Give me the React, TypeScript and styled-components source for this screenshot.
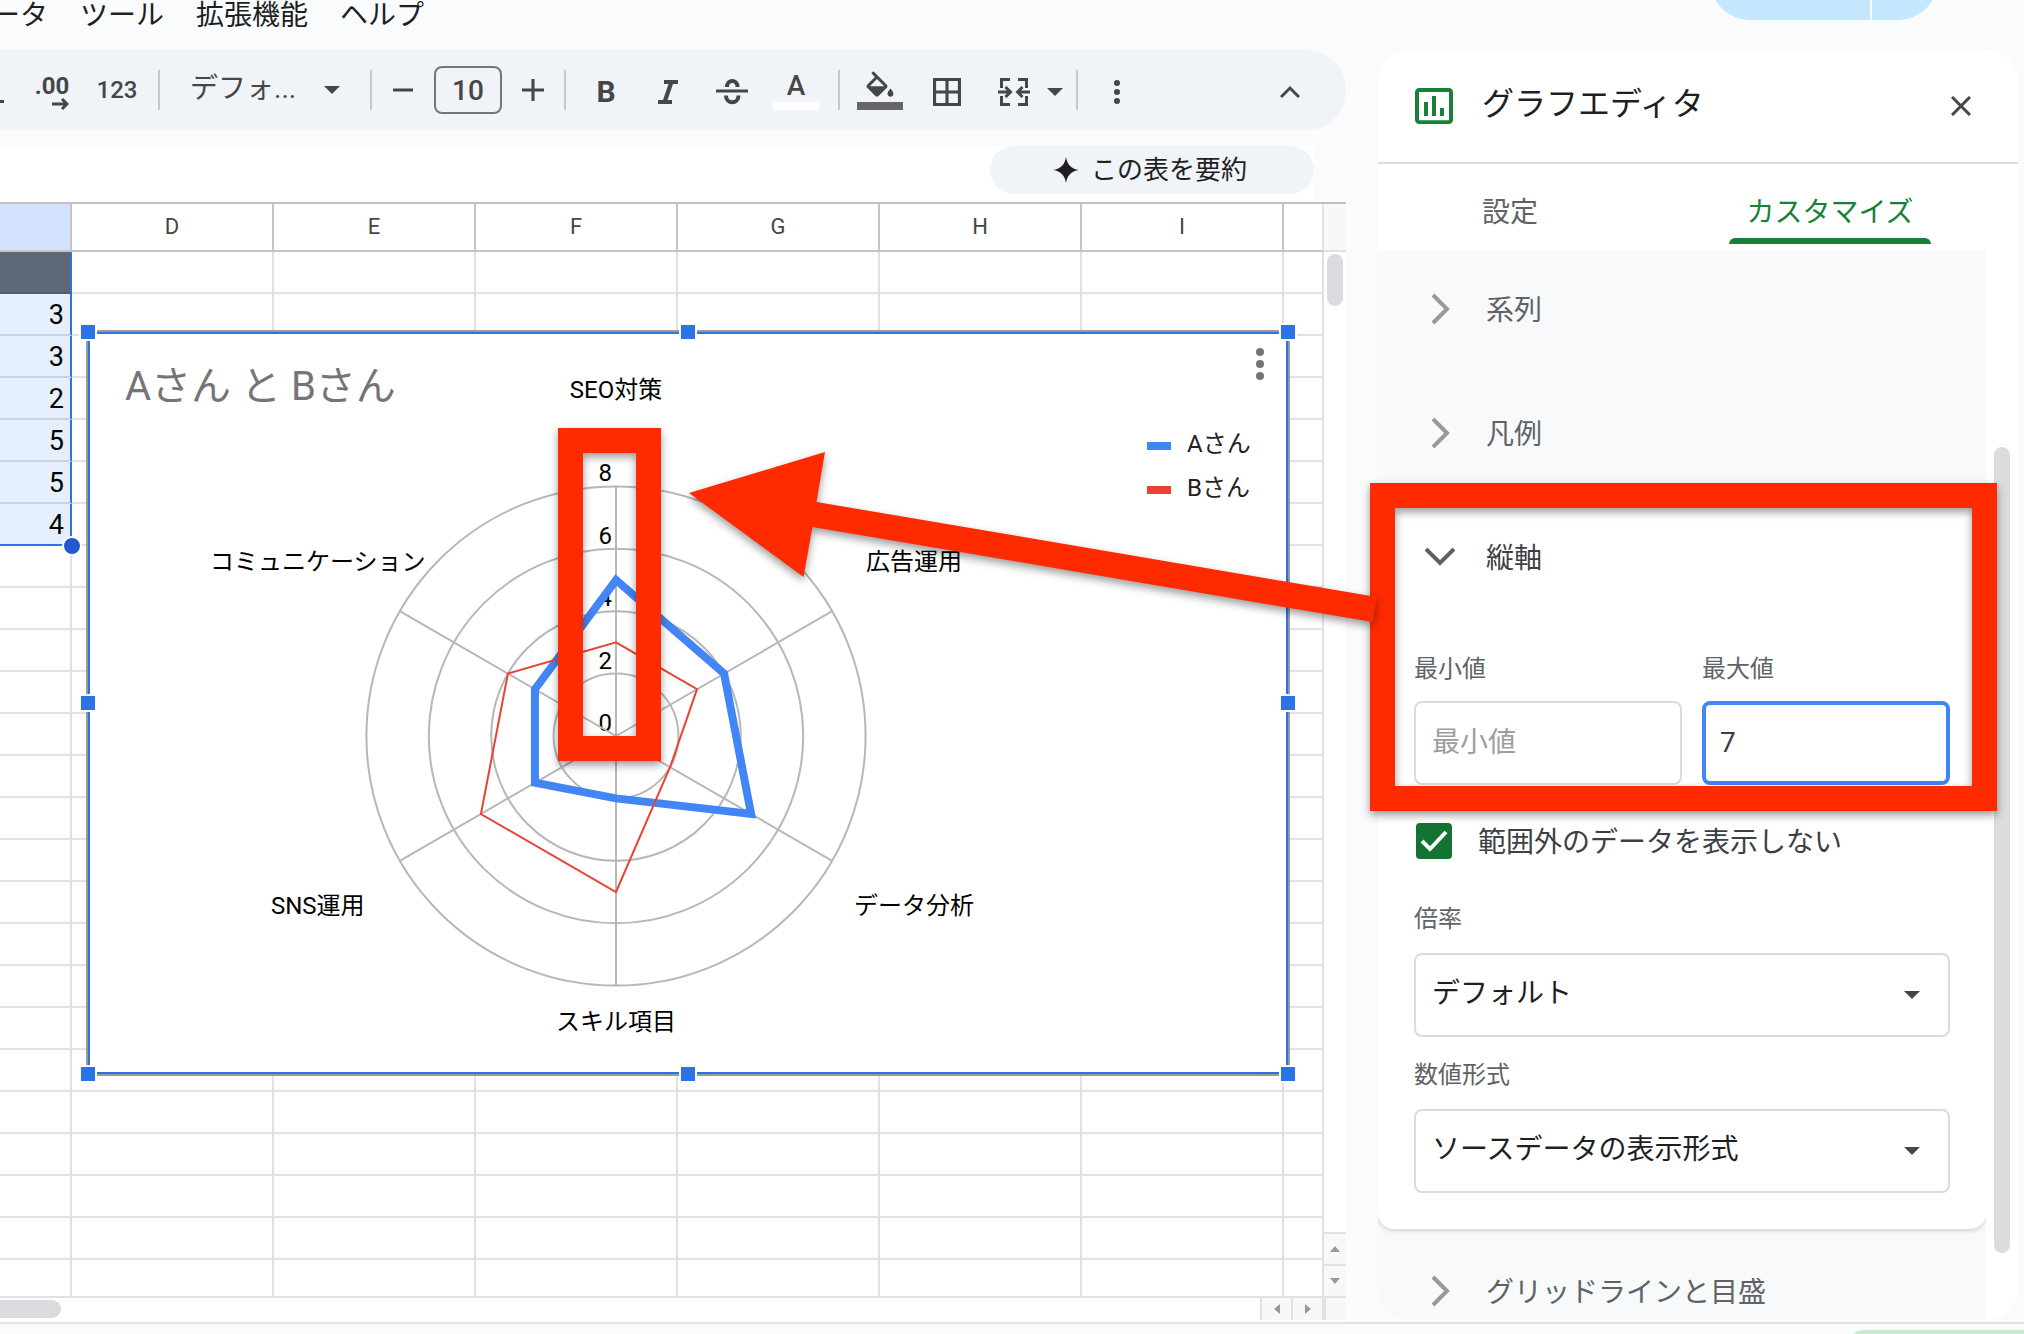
import React from "react";
import styled, { createGlobalStyle } from "styled-components";

const INK = "#1f1f1f";
const ICON = "#444746";
const MUTED = "#5f6368";
const LINE = "#e1e1e1";
const HEAD_LINE = "#c4c4c4";
const PANEL_LINE = "#dadce0";
const SURFACE = "#f9fbfd";
const TOOL_BG = "#f0f3f8";
const BLUE = "#2a74e8";
const GREEN = "#188038";
const MARK = "#ff2a00";

const GlobalStyle = createGlobalStyle`
  *, *::before, *::after { box-sizing: border-box; }
  body {
    margin: 0;
    background: ${SURFACE};
    color: ${INK};
    font-family: Roboto, "Noto Sans CJK JP", sans-serif;
    font-size: 28px;
  }
  button, input, select { font: inherit; color: inherit; margin: 0; }
  button { border: 0; background: none; padding: 0; cursor: pointer; }
  svg { display: block; flex: none; }
`;

/* ---------- page frame ---------- */

const Page = styled.div`
  position: relative;
  display: flex;
  flex-direction: column;
  height: 100vh;
  overflow: hidden;
`;

const TopBar = styled.header`
  display: flex;
  justify-content: space-between;
  flex: none;
  height: 50px;
`;

const MenuList = styled.nav`
  display: flex;
  align-items: flex-start;
  margin-left: -52px;
`;

const MenuItem = styled.button`
  padding: 0 16px;
  height: 32px;
  line-height: 32px;
  white-space: nowrap;
`;

const ShareGroup = styled.div`
  display: flex;
  align-self: flex-end;
  gap: 2px;
  margin: 0 86px 30px 0;
`;

const ShareButton = styled.button<{ $side: "left" | "right" }>`
  width: ${(p) => (p.$side === "left" ? 160 : 66)}px;
  height: 80px;
  background: #c2e7ff;
  border-radius: ${(p) => (p.$side === "left" ? "40px 0 0 40px" : "0 40px 40px 0")};
`;

const Main = styled.main`
  display: flex;
  flex: 1;
  min-height: 0;
  gap: 32px;
  padding-right: 6px;
`;

const Workspace = styled.section`
  display: flex;
  flex-direction: column;
  flex: 1;
  min-width: 0;
`;

const Footer = styled.footer`
  display: flex;
  justify-content: flex-end;
  flex: none;
  height: 12px;
  padding-top: 6px;
  border-top: 2px solid #e1e3e1;
  overflow: hidden;
`;

const FooterChip = styled.button`
  width: 200px;
  height: 60px;
  margin-right: -24px;
  border-radius: 16px;
  background: #c4eed0;
`;

/* ---------- toolbar ---------- */

const Toolbar = styled.div`
  display: flex;
  align-items: center;
  flex: none;
  height: 80px;
  margin-bottom: 16px;
  padding-right: 34px;
  background: ${TOOL_BG};
  border-radius: 0 40px 40px 0;
  color: ${ICON};
  fill: ${ICON};
`;

const Tool = styled.button<{ $w: number; $low?: boolean }>`
  display: flex;
  flex-direction: column;
  align-items: center;
  justify-content: center;
  flex: none;
  width: ${(p) => p.$w}px;
  height: 56px;
  padding-top: ${(p) => (p.$low ? 4 : 0)}px;
`;

const Rule = styled.span`
  flex: none;
  width: 2px;
  height: 40px;
  margin: 0 10px;
  background: #c7c7c7;
`;

const Spacer = styled.span`
  flex: 1;
`;

const SmallGlyph = styled.span`
  font-size: 24px;
  font-weight: 500;
  line-height: 24px;
`;

const DecimalGlyph = styled.span`
  font-size: 24px;
  font-weight: 700;
  line-height: 24px;
`;

const BoldGlyph = styled.span`
  font-size: 30px;
  font-weight: 700;
  line-height: 32px;
`;

const ColourGlyph = styled.span`
  font-size: 28px;
  font-weight: 500;
  line-height: 28px;
`;

const SizeInput = styled.input`
  width: 68px;
  height: 48px;
  margin: 0 10px;
  padding: 0;
  border: 2px solid #747775;
  border-radius: 8px;
  background: none;
  font-weight: 500;
  text-align: center;
`;

const ColourTool = styled(Tool)`
  justify-content: flex-end;
  height: 40px;
  padding: 0;
`;

const ColourBar = styled.span<{ $c: string }>`
  flex: none;
  width: 46px;
  height: 8px;
  margin-top: 2px;
  background: ${(p) => p.$c};
`;

const Picker = styled.div`
  position: relative;
  flex: none;
  width: 190px;
  height: 48px;
`;

const PickerSelect = styled.select`
  appearance: none;
  width: 100%;
  height: 44px;
  padding: 0 0 0 20px;
  border: 0;
  background: none;
`;

const PickerCaret = styled.span`
  position: absolute;
  right: 20px;
  top: 20px;
  pointer-events: none;
`;

/* ---------- formula bar ---------- */

const FormulaBar = styled.div`
  display: flex;
  justify-content: flex-end;
  flex: none;
  height: 56px;
  margin-right: 32px;
  background: #fff;
`;

const SummaryButton = styled.button`
  display: flex;
  align-items: center;
  justify-content: center;
  gap: 12px;
  width: 324px;
  height: 48px;
  padding-right: 4px;
  border-radius: 24px;
  background: ${TOOL_BG};
  font-size: 26px;
  line-height: 44px;
`;

/* ---------- sheet ---------- */

const Sheet = styled.div`
  display: flex;
  flex-direction: column;
  flex: 1;
  min-height: 0;
  border-top: 2px solid #c0c0c0;
  background: #fff;
`;

const SheetBody = styled.div`
  display: flex;
  flex: 1;
  min-height: 0;
  border-bottom: 2px solid ${LINE};
`;

const GridView = styled.div`
  position: relative;
  flex: 1;
  min-width: 0;
  overflow: hidden;
`;

const Grid = styled.table`
  width: 100%;
  table-layout: fixed;
  border-collapse: separate;
  border-spacing: 0;
`;

const HeadCell = styled.th<{ $w?: number; $on?: boolean }>`
  width: ${(p) => (p.$w ? `${p.$w}px` : "auto")};
  height: 48px;
  padding: 0;
  border-right: 2px solid ${HEAD_LINE};
  border-bottom: 2px solid ${HEAD_LINE};
  background: ${(p) => (p.$on ? "#d3e3fd" : "#fff")};
  color: ${ICON};
  font-size: 22px;
  font-weight: 400;
  line-height: 44px;
  &:last-child { border-right-color: ${LINE}; }
`;

const Cell = styled.td`
  height: 42px;
  padding: 0;
  border-right: 2px solid ${LINE};
  border-bottom: 2px solid ${LINE};
`;

const PickedCell = styled(Cell)<{ $kind: "head" | "mid" | "last" }>`
  position: relative;
  padding: 2px 6px 0 0;
  border-right-color: ${BLUE};
  border-bottom-color: ${(p) => (p.$kind === "head" ? "#555d6a" : p.$kind === "mid" ? "#c9d2e3" : BLUE)};
  background: ${(p) => (p.$kind === "head" ? "#5f6876" : "#e6effd")};
  color: #000;
  font-size: 27px;
  line-height: 38px;
  text-align: right;
`;

const FillHandle = styled.span`
  position: absolute;
  right: -12px;
  bottom: -12px;
  z-index: 1;
  width: 20px;
  height: 20px;
  border: 2px solid #fff;
  border-radius: 50%;
  background: #2457d0;
`;

const VScroll = styled.div`
  display: flex;
  flex-direction: column;
  flex: none;
  width: 22px;
`;

const VHead = styled.div`
  height: 48px;
  border-bottom: 2px solid ${LINE};
  background: #f8f8f8;
`;

const VTrack = styled.div`
  flex: 1;
  padding: 2px 3px;
`;

const VThumb = styled.div`
  height: 52px;
  border-radius: 8px;
  background: #dadce0;
`;

const VButton = styled.button`
  display: flex;
  align-items: center;
  justify-content: center;
  height: 32px;
  border-top: 2px solid ${LINE};
  background: #f8f8f8;
`;

const HScroll = styled.div`
  display: flex;
  flex: none;
  height: 22px;
  margin-bottom: 2px;
`;

const HTrack = styled.div`
  flex: 1;
  padding: 2px 0;
`;

const HThumb = styled.div`
  width: 61px;
  height: 18px;
  border-radius: 0 9px 9px 0;
  background: #dadce0;
`;

const HButton = styled.button`
  display: flex;
  align-items: center;
  justify-content: center;
  width: 31px;
  border-left: 2px solid ${LINE};
  background: #f8f8f8;
`;

const Corner = styled.div`
  width: 24px;
  border-left: 4px solid #e1e3e1;
  background: #f8f8f8;
`;

/* ---------- floating chart ---------- */

const ChartFrame = styled.figure`
  position: absolute;
  left: 86px;
  top: 126px;
  width: 1204px;
  height: 746px;
  margin: 0;
  border: 2px solid #999;
  background: #fff;
  box-shadow: inset 0 0 0 2px ${BLUE};
`;

const ChartSvg = styled.svg`
  margin: -2px;
  font-size: 24px;
`;

const Handle = styled.span<{ $x: number; $y: number }>`
  position: absolute;
  left: ${(p) => p.$x}%;
  top: ${(p) => p.$y}%;
  width: 18px;
  height: 18px;
  margin: -9px;
  border: 2px solid #fff;
  background: ${BLUE};
`;

/* ---------- chart editor ---------- */

const Editor = styled.aside`
  display: flex;
  flex-direction: column;
  flex: none;
  width: 640px;
  margin-bottom: 2px;
  border-radius: 32px;
  background: #fff;
  overflow: hidden;
`;

const EditorHead = styled.div`
  display: flex;
  align-items: center;
  flex: none;
  height: 114px;
  padding: 0 34px 0 32px;
  border-bottom: 2px solid ${PANEL_LINE};
`;

const EditorTitle = styled.h2`
  flex: 1;
  margin: 0 0 4px 24px;
  font-size: 32px;
  font-weight: 400;
  line-height: 40px;
`;

const CloseButton = styled.button`
  display: flex;
  align-items: center;
  justify-content: center;
  width: 46px;
  height: 46px;
`;

const Tabs = styled.div`
  position: relative;
  display: grid;
  grid-template-columns: 264fr 376fr;
  justify-items: center;
  flex: none;
  height: 83px;
  background: #fff;
  box-shadow: 0 3px 0 #fff;
`;

const Tab = styled.button<{ $on?: boolean }>`
  position: relative;
  height: 80px;
  padding: 12px 17px 0;
  color: ${(p) => (p.$on ? GREEN : MUTED)};
  &::after {
    content: "";
    position: absolute;
    inset: auto 0 0;
    height: 6px;
    border-radius: 6px 6px 0 0;
    background: ${(p) => (p.$on ? GREEN : "transparent")};
  }
`;

const EditorBody = styled.div`
  display: flex;
  flex: 1;
  min-height: 0;
`;

const Sections = styled.div`
  flex: 1;
  min-width: 0;
  overflow: hidden;
  background: #f8f9fb;
`;

const SectionHead = styled.button<{ $open?: boolean }>`
  display: flex;
  align-items: center;
  gap: 18px;
  width: 100%;
  height: 124px;
  padding-left: 30px;
  color: ${(p) => (p.$open ? "#3c4043" : MUTED)};
  text-align: left;
`;

const SectionName = styled.span`
  padding-bottom: 2px;
`;

const OpenCard = styled.section`
  border-radius: 16px;
  background: #fff;
  box-shadow: 0 2px 4px rgba(60, 64, 67, 0.2);
`;

const Fields = styled.div`
  padding: 34px 36px 36px;
`;

const Pair = styled.div`
  display: grid;
  grid-template-columns: 268fr 248fr;
  gap: 20px;
`;

const Label = styled.label`
  display: block;
  color: ${MUTED};
  font-size: 24px;
  line-height: 32px;
`;

const NumberBox = styled.input`
  display: block;
  width: 100%;
  height: 84px;
  margin-top: 16px;
  padding: 0 16px 2px;
  border: 2px solid ${PANEL_LINE};
  border-radius: 8px;
  outline: 0;
  color: #3c4043;
  &::placeholder { color: #9e9e9e; }
`;

const ActiveNumberBox = styled(NumberBox)`
  padding: 0 14px 2px;
  border: 4px solid #4285f4;
`;

const CheckRow = styled.label`
  display: flex;
  align-items: center;
  gap: 26px;
  height: 36px;
  margin: 38px 0 44px 2px;
  color: #3c4043;
`;

const CheckText = styled.span`
  padding-bottom: 2px;
`;

const CheckWrap = styled.span`
  position: relative;
  width: 36px;
  height: 36px;
`;

const CheckBox = styled.input`
  appearance: none;
  display: block;
  width: 36px;
  height: 36px;
  border-radius: 4px;
  background: #137333;
`;

const CheckMark = styled.svg`
  position: absolute;
  inset: 0;
  pointer-events: none;
`;

const SelectWrap = styled.div`
  position: relative;
  margin: 18px 0 22px;
  &:last-child { margin-bottom: 0; }
`;

const SelectBox = styled.select`
  appearance: none;
  display: block;
  width: 100%;
  height: 84px;
  padding: 0 60px 4px 16px;
  border: 2px solid ${PANEL_LINE};
  border-radius: 8px;
  background: #fff;
`;

const SelectCaret = styled.span`
  position: absolute;
  right: 30px;
  top: 38px;
  pointer-events: none;
`;

const EditorTrack = styled.div`
  flex: none;
  width: 32px;
  padding: 200px 8px 0;
`;

const EditorThumb = styled.div`
  height: 806px;
  border-radius: 8px;
  background: ${PANEL_LINE};
`;

/* ---------- annotations drawn over the page ---------- */

const MarkBox = styled.div`
  position: absolute;
  border: 25px solid ${MARK};
  pointer-events: none;
  filter: drop-shadow(0 4px 4px rgba(0, 0, 0, 0.4));
`;

const AxisMark = styled(MarkBox)`
  left: 558px;
  top: 428px;
  width: 103px;
  height: 333px;
`;

const FieldMark = styled(MarkBox)`
  right: 27px;
  top: 483px;
  width: 627px;
  height: 328px;
`;

const ArrowMark = styled.svg`
  position: absolute;
  right: 640px;
  top: 440px;
  pointer-events: none;
  filter: drop-shadow(0 4px 4px rgba(0, 0, 0, 0.4));
`;

/* ---------- icons ---------- */

const Caret = () => (
  <svg width="16" height="8" viewBox="0 0 16 8" fill={ICON}>
    <path d="M0 0h16L8 8z" />
  </svg>
);

const Triangle = ({ turn }: { turn: number }) => (
  <svg width="12" height="12" viewBox="0 0 12 12" fill="#999">
    <path d="M1 9h10L6 3z" transform={`rotate(${turn} 6 6)`} />
  </svg>
);

const Chevron = ({ open }: { open?: boolean }) => (
  <svg width="60" height="40" viewBox="0 0 60 40" fill="none" stroke={open ? "#616161" : "#999"} strokeWidth="4">
    {open ? <path d="M18 12l14 14 14-14" /> : <path d="M25 6l14 14-14 14" />}
  </svg>
);

/* ---------- radar chart ---------- */

const CX = 530;
const CY = 406;
const UNIT = 31.2;
const AXES = [0, 1, 2, 3, 4, 5];

const spot = (axis: number, value: number) => {
  const a = (axis * Math.PI) / 3;
  return `${CX + Math.sin(a) * value * UNIT},${CY - Math.cos(a) * value * UNIT}`;
};

const SERIES = [
  { name: "Aさん", colour: "#4285f4", width: 8, values: [5, 4, 5, 2, 3, 3] },
  { name: "Bさん", colour: "#ea4335", width: 2, values: [3, 3, 2, 5, 5, 4] },
];

const AXIS_LABELS: { text: string; x: number; y: number; mid?: boolean }[] = [
  { text: "SEO対策", x: 530, y: 68, mid: true },
  { text: "広告運用", x: 780, y: 240 },
  { text: "データ分析", x: 768, y: 584 },
  { text: "スキル項目", x: 530, y: 700, mid: true },
  { text: "SNS運用", x: 185, y: 584 },
  { text: "コミュニケーション", x: 124, y: 240 },
];

const Radar = () => (
  <ChartSvg width="1204" height="746" viewBox="0 0 1204 746">
    <text x="39" y="70" fontSize="40" fill="#757575">Aさん と Bさん</text>
    {AXIS_LABELS.map((l) => (
      <text key={l.text} x={l.x} y={l.y} textAnchor={l.mid ? "middle" : "start"}>{l.text}</text>
    ))}
    {[0, 2, 4, 6, 8].map((v) => (
      <text key={v} x="526" y={Math.round(401 - v * UNIT)} textAnchor="end">{v}</text>
    ))}
    <g fill="none" stroke="#b7b7b7" strokeWidth="2">
      {[2, 4, 6, 8].map((v) => <circle key={v} cx={CX} cy={CY} r={v * UNIT} />)}
      {AXES.map((a) => <polyline key={a} points={`${CX},${CY} ${spot(a, 8)}`} />)}
    </g>
    {SERIES.map((s) => (
      <polygon
        key={s.name}
        points={s.values.map((v, i) => spot(i, v)).join(" ")}
        fill="none"
        stroke={s.colour}
        strokeWidth={s.width}
      />
    ))}
    {SERIES.map((s, i) => (
      <g key={s.name}>
        <rect x="1061" y={112 + i * 44} width="24" height="8" fill={s.colour} />
        <text x="1101" y={122 + i * 44} fill="#222">{s.name}</text>
      </g>
    ))}
    <g fill="#757575">
      {[22, 34, 46].map((y) => <circle key={y} cx="1174" cy={y} r="4" />)}
    </g>
  </ChartSvg>
);

const HANDLES: [number, number][] = [[0, 0], [50, 0], [100, 0], [0, 50], [100, 50], [0, 100], [50, 100], [100, 100]];
const COLUMNS = ["D", "E", "F", "G", "H", "I"];
const PICKED = ["", "3", "3", "2", "5", "5", "4"];
const ROWS = Array.from({ length: 25 }, (_, i) => i);

export default function App() {
  return (
    <Page>
      <GlobalStyle />
      <TopBar>
        <MenuList>
          {["データ", "ツール", "拡張機能", "ヘルプ"].map((m) => <MenuItem key={m}>{m}</MenuItem>)}
        </MenuList>
        <ShareGroup>
          <ShareButton $side="left" aria-label="共有" />
          <ShareButton $side="right" aria-label="共有オプション" />
        </ShareGroup>
      </TopBar>

      <Main>
        <Workspace>
          <Toolbar>
            <Tool $w={18} aria-label="小数点以下の桁数を減らす">
              <svg width="18" height="36" viewBox="0 0 18 36"><path d="M0 28h4v3H0z" /></svg>
            </Tool>
            <Tool $w={68} $low aria-label="小数点以下の桁数を増やす">
              <DecimalGlyph>.00</DecimalGlyph>
              <svg width="34" height="12" viewBox="0 0 34 12" fill="none" stroke={ICON} strokeWidth="3">
                <path d="M17 6h15M27 1l5 5-5 5" />
              </svg>
            </Tool>
            <Tool $w={62}><SmallGlyph>123</SmallGlyph></Tool>
            <Rule />
            <Picker>
              <PickerSelect aria-label="フォント"><option>デフォ...</option></PickerSelect>
              <PickerCaret><Caret /></PickerCaret>
            </Picker>
            <Rule />
            <Tool $w={42} aria-label="縮小">
              <svg width="20" height="20" viewBox="0 0 20 20"><path d="M0 8.5h20v3H0z" /></svg>
            </Tool>
            <SizeInput aria-label="フォントサイズ" defaultValue="10" />
            <Tool $w={42} aria-label="拡大">
              <svg width="22" height="22" viewBox="0 0 20 20"><path d="M0 8.6h8.600V0h2.800v8.600H20v2.800h-8.600V20h-2.800v-8.600H0z" /></svg>
            </Tool>
            <Rule />
            <Tool $w={60} $low><BoldGlyph>B</BoldGlyph></Tool>
            <Tool $w={64} $low aria-label="斜体">
              <svg width="20" height="24" viewBox="0 0 20 24"><path d="M6 0h14v4h-5L9.500 20H14v4H0v-4h5L10.500 4H6z" /></svg>
            </Tool>
            <Tool $w={64} $low aria-label="取り消し線">
              <svg width="32" height="26" viewBox="0 0 32 26">
                <path d="M0 10.500h32v3H0z" />
                <path d="M11 8c0-8 10.500-8 10.500 0M10 16.500c0 9 12.500 9 12.500 0" fill="none" stroke={ICON} strokeWidth="4" />
              </svg>
            </Tool>
            <ColourTool $w={64}>
              <ColourGlyph>A</ColourGlyph>
              <ColourBar $c="#fff" />
            </ColourTool>
            <Rule />
            <ColourTool $w={60} aria-label="塗りつぶしの色">
              <svg width="36" height="29" viewBox="0 0 24 19">
                <path d="M16.560 8.940L7.620 0 6.210 1.410l2.380 2.380-5.150 5.150c-.59.59-.59 1.540 0 2.120l5.500 5.500c.29.29.68.44 1.060.44s.77-.15 1.060-.44l5.500-5.500c.59-.58.59-1.530 0-2.120zM5.210 10L10 5.210 14.790 10H5.210zM19 11.500s-2 2.170-2 3.500c0 1.100.9 2 2 2s2-.9 2-2c0-1.330-2-3.500-2-3.500z" />
              </svg>
              <ColourBar $c="#666" />
            </ColourTool>
            <Tool $w={74} $low aria-label="枠線">
              <svg width="28" height="28" viewBox="3 3 18 18"><path d="M3 3v18h18V3H3zm8 16H5v-6h6v6zm0-8H5V5h6v6zm8 8h-6v-6h6v6zm0-8h-6V5h6v6z" /></svg>
            </Tool>
            <Tool $w={60} $low aria-label="セルを結合">
              <svg width="32" height="28" viewBox="0 0 32 28" fill="none" stroke={ICON} strokeWidth="3">
                <path d="M12 1.500H3.500V10M20 1.500h8.500V10M12 26.500H3.500V18M20 26.500h8.500V18M0 14h12M7.500 9l5 5-5 5M32 14H20M24.500 9l-5 5 5 5" />
              </svg>
            </Tool>
            <Tool $w={22} $low aria-label="結合の種類"><Caret /></Tool>
            <Rule />
            <Tool $w={58} $low aria-label="その他">
              <svg width="8" height="26" viewBox="0 0 8 26"><circle cx="4" cy="4" r="3" /><circle cx="4" cy="13" r="3" /><circle cx="4" cy="22" r="3" /></svg>
            </Tool>
            <Spacer />
            <Tool $w={44} $low aria-label="メニューを非表示">
              <svg width="20" height="14" viewBox="0 0 20 14" fill="none" stroke={ICON} strokeWidth="3"><path d="M1 12l9-9 9 9" /></svg>
            </Tool>
          </Toolbar>

          <FormulaBar>
            <SummaryButton>
              <svg width="26" height="26" viewBox="0 0 26 26" fill={INK}>
                <path d="M13 0c1 7 5 12 13 13-8 1-12 6-13 13-1-7-5-12-13-13 8-1 12-6 13-13z" />
              </svg>
              この表を要約
            </SummaryButton>
          </FormulaBar>

          <Sheet>
            <SheetBody>
              <GridView>
                <Grid>
                  <thead>
                    <tr>
                      <HeadCell $w={72} $on />
                      {COLUMNS.map((c) => <HeadCell key={c} $w={202}>{c}</HeadCell>)}
                      <HeadCell />
                    </tr>
                  </thead>
                  <tbody>
                    {ROWS.map((r) => (
                      <tr key={r}>
                        {r < PICKED.length ? (
                          <PickedCell $kind={r === 0 ? "head" : r === PICKED.length - 1 ? "last" : "mid"}>
                            {PICKED[r]}
                            {r === PICKED.length - 1 && <FillHandle />}
                          </PickedCell>
                        ) : (
                          <Cell />
                        )}
                        {COLUMNS.map((c) => <Cell key={c} />)}
                        <Cell />
                      </tr>
                    ))}
                  </tbody>
                </Grid>
                <ChartFrame>
                  <Radar />
                  {HANDLES.map(([x, y]) => <Handle key={`${x}-${y}`} $x={x} $y={y} />)}
                </ChartFrame>
              </GridView>
              <VScroll>
                <VHead />
                <VTrack><VThumb /></VTrack>
                <VButton aria-label="上へ"><Triangle turn={0} /></VButton>
                <VButton aria-label="下へ"><Triangle turn={180} /></VButton>
              </VScroll>
            </SheetBody>
            <HScroll>
              <HTrack><HThumb /></HTrack>
              <HButton aria-label="左へ"><Triangle turn={-90} /></HButton>
              <HButton aria-label="右へ"><Triangle turn={90} /></HButton>
              <Corner />
            </HScroll>
          </Sheet>
        </Workspace>

        <Editor>
          <EditorHead>
            <svg width="48" height="48" viewBox="0 0 24 24" fill={GREEN}>
              <path d="M9 17H7v-7h2v7zm4 0h-2V7h2v10zm4 0h-2v-4h2v4zM19.500 3h-15c-1.100 0-2 .9-2 2v14c0 1.100.9 2 2 2h15c1.100 0 2-.9 2-2V5c0-1.100-.9-2-2-2zm0 16.100h-15V5h15v14.100z" />
            </svg>
            <EditorTitle>グラフエディタ</EditorTitle>
            <CloseButton aria-label="閉じる">
              <svg width="20" height="20" viewBox="0 0 20 20" fill="none" stroke={ICON} strokeWidth="3"><path d="M1 1l18 18M19 1L1 19" /></svg>
            </CloseButton>
          </EditorHead>
          <Tabs role="tablist">
            <Tab role="tab">設定</Tab>
            <Tab role="tab" aria-selected $on>カスタマイズ</Tab>
          </Tabs>
          <EditorBody>
            <Sections>
              <SectionHead><Chevron /><SectionName>系列</SectionName></SectionHead>
              <SectionHead><Chevron /><SectionName>凡例</SectionName></SectionHead>
              <OpenCard>
                <SectionHead $open><Chevron open /><SectionName>縦軸</SectionName></SectionHead>
                <Fields>
                  <Pair>
                    <div>
                      <Label htmlFor="axis-min">最小値</Label>
                      <NumberBox id="axis-min" placeholder="最小値" />
                    </div>
                    <div>
                      <Label htmlFor="axis-max">最大値</Label>
                      <ActiveNumberBox id="axis-max" defaultValue="7" />
                    </div>
                  </Pair>
                  <CheckRow>
                    <CheckWrap>
                      <CheckBox type="checkbox" defaultChecked />
                      <CheckMark width="36" height="36" viewBox="0 0 36 36" fill="none" stroke="#fff" strokeWidth="4">
                        <path d="M6 18l8 8L30 9" />
                      </CheckMark>
                    </CheckWrap>
                    <CheckText>範囲外のデータを表示しない</CheckText>
                  </CheckRow>
                  <Label htmlFor="axis-scale">倍率</Label>
                  <SelectWrap>
                    <SelectBox id="axis-scale"><option>デフォルト</option></SelectBox>
                    <SelectCaret><Caret /></SelectCaret>
                  </SelectWrap>
                  <Label htmlFor="axis-format">数値形式</Label>
                  <SelectWrap>
                    <SelectBox id="axis-format"><option>ソースデータの表示形式</option></SelectBox>
                    <SelectCaret><Caret /></SelectCaret>
                  </SelectWrap>
                </Fields>
              </OpenCard>
              <SectionHead><Chevron /><SectionName>グリッドラインと目盛</SectionName></SectionHead>
            </Sections>
            <EditorTrack><EditorThumb /></EditorTrack>
          </EditorBody>
        </Editor>
      </Main>

      <Footer><FooterChip aria-label="シートを追加" /></Footer>

      <AxisMark />
      <FieldMark />
      <ArrowMark width="704" height="200" viewBox="680 440 704 200" fill={MARK}>
        <path d="M689 493L825 452l-8.500 50L1377 597l-4.500 25L812.500 527l-9 50z" />
      </ArrowMark>
    </Page>
  );
}
